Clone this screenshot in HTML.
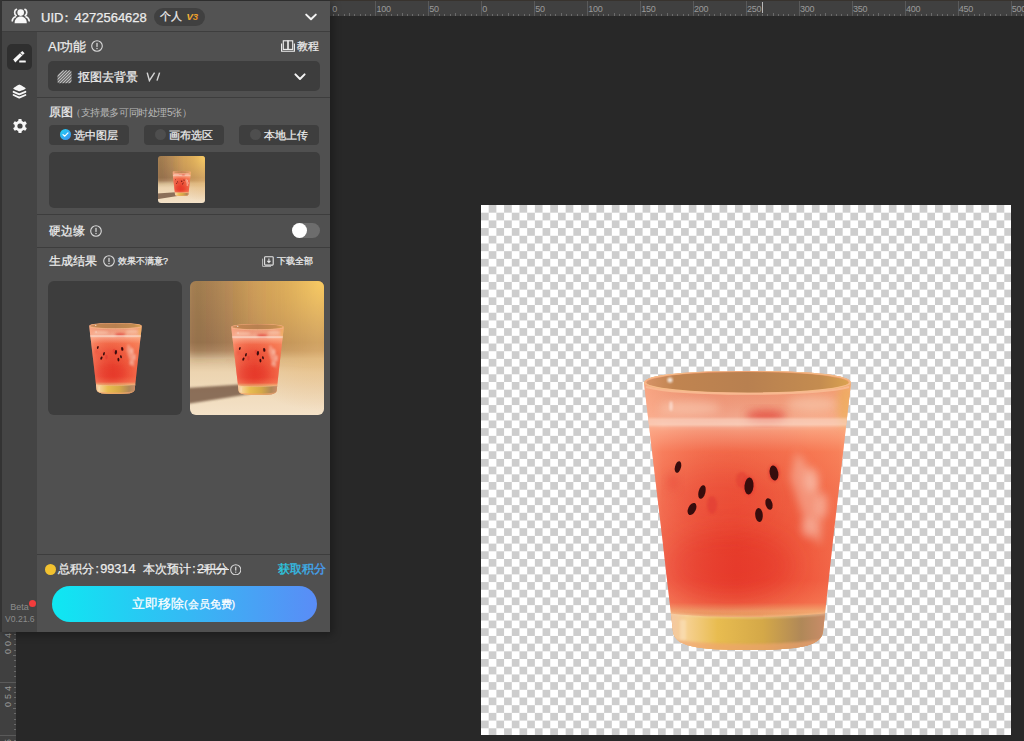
<!DOCTYPE html>
<html><head><meta charset="utf-8">
<style>
*{box-sizing:border-box;margin:0;padding:0}
html,body{width:1024px;height:741px;overflow:hidden;background:#282828;font-family:"Liberation Sans",sans-serif;color:#ececec}
.a{position:absolute}
.t{position:absolute;white-space:nowrap;line-height:1}
.m{-webkit-text-stroke:.25px currentColor}
#rtop{left:330px;top:0;width:694px;height:16px;background:#404040;border-top:1px solid #38332e;overflow:hidden}
#rleft{left:0;top:600px;width:16px;height:141px;background:#404040;overflow:hidden}
.rl{position:absolute;font-size:9px;letter-spacing:-.25px;line-height:1;color:#9a9a9a;white-space:nowrap}
.rv{transform:rotate(-90deg);transform-origin:50% 50%;width:8px;text-align:center}
#canvas{left:481px;top:205px;width:530px;height:530px;
 background:conic-gradient(#cdcdcd 0 25%,#fff 0 50%,#cdcdcd 0 75%,#fff 0);background-size:15.4px 15.4px}
#panel{left:0;top:0;width:330px;height:632px;background:#505050;box-shadow:3px 3px 8px rgba(0,0,0,.3);overflow:hidden}
.div{position:absolute;left:37px;width:293px;height:1px;background:#3d3d3d}
.btn{position:absolute;top:125px;width:80px;height:20px;background:#3e3e3e;border-radius:4px}
.rad{position:absolute;top:129px;width:11px;height:11px;border-radius:50%;background:#4e4e4e}
.info{position:absolute;width:12px;height:12px}
</style></head><body>
<svg width="0" height="0" style="position:absolute">
<defs>
 <clipPath id="gbody"><path d="M644,383 C644,374 690,371 747.5,371 C805,371 851,374 851,383 L833,540 L823,632 C821,646 800,650 748,650 C696,650 675,646 673,632 L662.5,540 Z"/></clipPath>
 <linearGradient id="gv" x1="0" y1="371" x2="0" y2="650" gradientUnits="userSpaceOnUse">
  <stop offset="0" stop-color="#e8a070"/>
  <stop offset=".08" stop-color="#eea07e"/>
  <stop offset=".11" stop-color="#f0a686"/>
  <stop offset=".17" stop-color="#f4b498"/>
  <stop offset=".19" stop-color="#f8c6ae"/>
  <stop offset=".215" stop-color="#f8a282"/>
  <stop offset=".29" stop-color="#f4704e"/>
  <stop offset=".43" stop-color="#ee5c40"/>
  <stop offset=".6" stop-color="#ec5038"/>
  <stop offset=".75" stop-color="#ec4c36"/>
  <stop offset=".83" stop-color="#f06446"/>
  <stop offset=".86" stop-color="#eea870"/>
  <stop offset=".93" stop-color="#e0b050"/>
  <stop offset="1" stop-color="#eea070"/>
 </linearGradient>
 <linearGradient id="gh" x1="644" y1="0" x2="851" y2="0" gradientUnits="userSpaceOnUse">
  <stop offset="0" stop-color="#ffaa88" stop-opacity=".7"/>
  <stop offset=".09" stop-color="#ffa080" stop-opacity=".3"/>
  <stop offset=".45" stop-color="#e03020" stop-opacity=".1"/>
  <stop offset=".8" stop-color="#ff9060" stop-opacity=".22"/>
  <stop offset=".94" stop-color="#ffa070" stop-opacity=".35"/>
  <stop offset="1" stop-color="#ffb080" stop-opacity=".7"/>
 </linearGradient>
 <linearGradient id="gbase" x1="672" y1="0" x2="824" y2="0" gradientUnits="userSpaceOnUse">
  <stop offset="0" stop-color="#f4c8a0"/>
  <stop offset=".1" stop-color="#f6d090"/>
  <stop offset=".3" stop-color="#e8bc50"/>
  <stop offset=".6" stop-color="#d4a848"/>
  <stop offset=".85" stop-color="#b08858"/>
  <stop offset="1" stop-color="#c88c68"/>
 </linearGradient>
 <linearGradient id="grim" x1="644" y1="0" x2="851" y2="0" gradientUnits="userSpaceOnUse">
  <stop offset="0" stop-color="#d89468"/>
  <stop offset=".15" stop-color="#c08450"/>
  <stop offset=".5" stop-color="#b88050"/>
  <stop offset=".85" stop-color="#c48c50"/>
  <stop offset="1" stop-color="#dca450"/>
 </linearGradient>
 <filter id="bl05" x="-50%" y="-50%" width="200%" height="200%"><feGaussianBlur stdDeviation=".6"/></filter>
 <filter id="bl1" x="-20%" y="-50%" width="140%" height="200%"><feGaussianBlur stdDeviation="1.2"/></filter>
 <filter id="bl3" x="-50%" y="-50%" width="200%" height="200%"><feGaussianBlur stdDeviation="4"/></filter>
 <filter id="bl8" x="-50%" y="-50%" width="200%" height="200%"><feGaussianBlur stdDeviation="12"/></filter>
 <symbol id="glass" viewBox="644 371 207 279">
  <g clip-path="url(#gbody)">
   <rect x="640" y="365" width="215" height="290" fill="url(#gv)"/>
   <!-- red center glow -->
   <ellipse cx="730" cy="565" rx="65" ry="35" fill="#e22a22" opacity=".5" filter="url(#bl8)"/>
   <ellipse cx="720" cy="500" rx="55" ry="30" fill="#ea4030" opacity=".3" filter="url(#bl8)"/>
   <rect x="640" y="365" width="215" height="290" fill="url(#gh)"/>
   <!-- pink blotches near seeds -->
   <ellipse cx="712" cy="505" rx="5" ry="9" fill="#e03a34" opacity=".6" filter="url(#bl1)"/>
   <ellipse cx="742" cy="480" rx="6" ry="8" fill="#e03a30" opacity=".5" filter="url(#bl1)"/>
   <ellipse cx="673" cy="482" rx="6" ry="9" fill="#e84a3a" opacity=".5" filter="url(#bl3)"/>
   <!-- foam streak right -->
   <path d="M796,452 C812,466 828,498 820,545 C806,534 800,505 790,478 Z" fill="#f8c4b0" opacity=".5" filter="url(#bl3)"/>
   <ellipse cx="812" cy="480" rx="7" ry="12" fill="#fcd8c8" opacity=".45" filter="url(#bl3)"/>
   <ellipse cx="822" cy="505" rx="6" ry="13" fill="#fcd8c8" opacity=".45" filter="url(#bl3)"/>
   <ellipse cx="808" cy="528" rx="7" ry="10" fill="#fad0c0" opacity=".45" filter="url(#bl3)"/>
   
   <!-- ice/foam band -->
   <ellipse cx="690" cy="408" rx="30" ry="7" fill="#fad0b8" opacity=".5" filter="url(#bl3)"/><ellipse cx="671" cy="406" rx="1.6" ry="5" fill="#fff" opacity=".5" filter="url(#bl1)"/>
   <ellipse cx="766" cy="416" rx="20" ry="6" fill="#e03a30" opacity=".7" filter="url(#bl3)"/><ellipse cx="846" cy="405" rx="9" ry="22" fill="#e8b050" opacity=".55" filter="url(#bl3)"/>
   <ellipse cx="812" cy="404" rx="25" ry="7" fill="#f8d0b8" opacity=".5" filter="url(#bl3)"/>
   <rect x="644" y="418" width="207" height="8" fill="#fad8c6" opacity=".55" filter="url(#bl1)"/>
   <!-- base -->
   <path d="M660,612 C700,619 800,619 840,611 L840,655 L655,655 Z" fill="url(#gbase)"/>
   <path d="M660,612 C700,619 800,619 840,611" fill="none" stroke="#f8d0a8" stroke-width="2" opacity=".6" filter="url(#bl1)"/>
   <path d="M666,638 C700,646 800,646 832,637 L832,655 L662,655 Z" fill="#f0a470" opacity=".65" filter="url(#bl1)"/>
   <rect x="680" y="620" width="6" height="20" fill="#fff0d8" opacity=".35" filter="url(#bl1)"/>
   <!-- inner back wall -->
   <ellipse cx="747.5" cy="382.5" rx="101" ry="10.5" fill="url(#grim)"/>
   <ellipse cx="747.5" cy="382" rx="103" ry="11.5" fill="none" stroke="#f4bc88" stroke-width="1.6"/>
   <path d="M646,387 C680,396 815,396 849,387" fill="none" stroke="#f8b890" stroke-width="2.2"/>
   <circle cx="670" cy="380" r="2.6" fill="#fff" opacity=".8" filter="url(#bl1)"/>
   
  </g>
  <!-- seeds -->
  <g fill="#e03830" opacity=".55" filter="url(#bl1)">
   <ellipse cx="774" cy="473" rx="6" ry="9"/><ellipse cx="749" cy="486" rx="6" ry="10"/>
  </g>
  <g fill="#380c0c" filter="url(#bl05)">
   <ellipse cx="678" cy="467" rx="3" ry="6" transform="rotate(15 678 467)"/>
   <ellipse cx="774" cy="473" rx="4.3" ry="7.5" transform="rotate(-10 774 473)"/>
   <ellipse cx="749" cy="486" rx="4.5" ry="8.5" transform="rotate(5 749 486)"/>
   <ellipse cx="702" cy="492" rx="3.4" ry="7" transform="rotate(15 702 492)"/>
   <ellipse cx="692" cy="509" rx="3.8" ry="6.5" transform="rotate(25 692 509)"/>
   <ellipse cx="769" cy="504" rx="3.4" ry="6" transform="rotate(-15 769 504)"/>
   <ellipse cx="759" cy="515" rx="3.8" ry="7" transform="rotate(-5 759 515)"/>
  </g>
 </symbol>
</defs>
</svg>

<svg width="0" height="0" style="position:absolute">
<defs>
 <linearGradient id="scv" x1="0" y1="0" x2="0" y2="1">
  <stop offset="0" stop-color="#b48c5a"/>
  <stop offset=".46" stop-color="#a67e56"/>
  <stop offset=".52" stop-color="#b89068"/>
  <stop offset=".58" stop-color="#dcc098"/>
  <stop offset=".68" stop-color="#ecd4b0"/>
  <stop offset="1" stop-color="#f4e2c8"/>
 </linearGradient>
 <radialGradient id="scr" cx="134" cy="0" r="130" gradientUnits="userSpaceOnUse">
  <stop offset="0" stop-color="#f8c858" stop-opacity="1"/>
  <stop offset=".55" stop-color="#e8b05a" stop-opacity=".5"/>
  <stop offset="1" stop-color="#d8a060" stop-opacity="0"/>
 </radialGradient>
 <linearGradient id="sch" x1="0" y1="0" x2="1" y2="0">
  <stop offset="0" stop-color="#5a4028" stop-opacity=".25"/>
  <stop offset=".5" stop-color="#5a4028" stop-opacity="0"/>
  <stop offset="1" stop-color="#fff0d0" stop-opacity=".12"/>
 </linearGradient>
 <filter id="sb1" x="-20%" y="-50%" width="140%" height="200%"><feGaussianBlur stdDeviation="1.2"/></filter>
 <filter id="sb4" x="-30%" y="-30%" width="160%" height="160%"><feGaussianBlur stdDeviation="5"/></filter>
 <filter id="sb2" x="-20%" y="-50%" width="140%" height="200%"><feGaussianBlur stdDeviation="2"/></filter>
 <symbol id="scene" viewBox="0 0 134 134">
  <rect width="134" height="134" fill="url(#scv)"/>
  <rect width="134" height="134" fill="url(#scr)"/>
  <rect x="0" y="-10" width="134" height="88" fill="url(#sch)" filter="url(#sb4)"/>
  <path d="M-3,107 L50,103.5 L60,113 L-3,123 Z" fill="#6a4c38" opacity=".75" filter="url(#sb1)"/>
  <svg x="41" y="43" width="53" height="71"><use href="#glass"/></svg>
 </symbol>
</defs>
</svg>

<div id="rtop" class="a"><div class="a" style="left:-7.55px;top:0;width:1px;height:16px;background:#5a5a5a"></div>
<div class="rl" style="left:2.20px;top:4px">0</div>
<div class="a" style="left:3.04px;top:13px;width:1px;height:3px;background:#6a6a6a"></div>
<div class="a" style="left:8.33px;top:13px;width:1px;height:3px;background:#6a6a6a"></div>
<div class="a" style="left:13.63px;top:13px;width:1px;height:3px;background:#6a6a6a"></div>
<div class="a" style="left:18.93px;top:12px;width:1px;height:4px;background:#6a6a6a"></div>
<div class="a" style="left:24.22px;top:13px;width:1px;height:3px;background:#6a6a6a"></div>
<div class="a" style="left:29.51px;top:13px;width:1px;height:3px;background:#6a6a6a"></div>
<div class="a" style="left:34.81px;top:13px;width:1px;height:3px;background:#6a6a6a"></div>
<div class="a" style="left:40.11px;top:13px;width:1px;height:3px;background:#6a6a6a"></div>
<div class="a" style="left:45.40px;top:0;width:1px;height:16px;background:#5a5a5a"></div>
<div class="rl" style="left:46.40px;top:4px">100</div>
<div class="a" style="left:50.69px;top:13px;width:1px;height:3px;background:#6a6a6a"></div>
<div class="a" style="left:55.99px;top:13px;width:1px;height:3px;background:#6a6a6a"></div>
<div class="a" style="left:61.28px;top:13px;width:1px;height:3px;background:#6a6a6a"></div>
<div class="a" style="left:66.58px;top:13px;width:1px;height:3px;background:#6a6a6a"></div>
<div class="a" style="left:71.88px;top:12px;width:1px;height:4px;background:#6a6a6a"></div>
<div class="a" style="left:77.17px;top:13px;width:1px;height:3px;background:#6a6a6a"></div>
<div class="a" style="left:82.46px;top:13px;width:1px;height:3px;background:#6a6a6a"></div>
<div class="a" style="left:87.76px;top:13px;width:1px;height:3px;background:#6a6a6a"></div>
<div class="a" style="left:93.05px;top:13px;width:1px;height:3px;background:#6a6a6a"></div>
<div class="a" style="left:98.35px;top:0;width:1px;height:16px;background:#5a5a5a"></div>
<div class="rl" style="left:99.35px;top:4px">50</div>
<div class="a" style="left:103.65px;top:13px;width:1px;height:3px;background:#6a6a6a"></div>
<div class="a" style="left:108.94px;top:13px;width:1px;height:3px;background:#6a6a6a"></div>
<div class="a" style="left:114.24px;top:13px;width:1px;height:3px;background:#6a6a6a"></div>
<div class="a" style="left:119.53px;top:13px;width:1px;height:3px;background:#6a6a6a"></div>
<div class="a" style="left:124.83px;top:12px;width:1px;height:4px;background:#6a6a6a"></div>
<div class="a" style="left:130.12px;top:13px;width:1px;height:3px;background:#6a6a6a"></div>
<div class="a" style="left:135.42px;top:13px;width:1px;height:3px;background:#6a6a6a"></div>
<div class="a" style="left:140.71px;top:13px;width:1px;height:3px;background:#6a6a6a"></div>
<div class="a" style="left:146.00px;top:13px;width:1px;height:3px;background:#6a6a6a"></div>
<div class="a" style="left:151.30px;top:0;width:1px;height:16px;background:#5a5a5a"></div>
<div class="rl" style="left:152.30px;top:4px">0</div>
<div class="a" style="left:156.60px;top:13px;width:1px;height:3px;background:#6a6a6a"></div>
<div class="a" style="left:161.89px;top:13px;width:1px;height:3px;background:#6a6a6a"></div>
<div class="a" style="left:167.19px;top:13px;width:1px;height:3px;background:#6a6a6a"></div>
<div class="a" style="left:172.48px;top:13px;width:1px;height:3px;background:#6a6a6a"></div>
<div class="a" style="left:177.78px;top:12px;width:1px;height:4px;background:#6a6a6a"></div>
<div class="a" style="left:183.07px;top:13px;width:1px;height:3px;background:#6a6a6a"></div>
<div class="a" style="left:188.37px;top:13px;width:1px;height:3px;background:#6a6a6a"></div>
<div class="a" style="left:193.66px;top:13px;width:1px;height:3px;background:#6a6a6a"></div>
<div class="a" style="left:198.96px;top:13px;width:1px;height:3px;background:#6a6a6a"></div>
<div class="a" style="left:204.25px;top:0;width:1px;height:16px;background:#5a5a5a"></div>
<div class="rl" style="left:205.25px;top:4px">50</div>
<div class="a" style="left:209.54px;top:13px;width:1px;height:3px;background:#6a6a6a"></div>
<div class="a" style="left:214.84px;top:13px;width:1px;height:3px;background:#6a6a6a"></div>
<div class="a" style="left:220.13px;top:13px;width:1px;height:3px;background:#6a6a6a"></div>
<div class="a" style="left:225.43px;top:13px;width:1px;height:3px;background:#6a6a6a"></div>
<div class="a" style="left:230.73px;top:12px;width:1px;height:4px;background:#6a6a6a"></div>
<div class="a" style="left:236.02px;top:13px;width:1px;height:3px;background:#6a6a6a"></div>
<div class="a" style="left:241.32px;top:13px;width:1px;height:3px;background:#6a6a6a"></div>
<div class="a" style="left:246.61px;top:13px;width:1px;height:3px;background:#6a6a6a"></div>
<div class="a" style="left:251.90px;top:13px;width:1px;height:3px;background:#6a6a6a"></div>
<div class="a" style="left:257.20px;top:0;width:1px;height:16px;background:#5a5a5a"></div>
<div class="rl" style="left:258.20px;top:4px">100</div>
<div class="a" style="left:262.50px;top:13px;width:1px;height:3px;background:#6a6a6a"></div>
<div class="a" style="left:267.79px;top:13px;width:1px;height:3px;background:#6a6a6a"></div>
<div class="a" style="left:273.09px;top:13px;width:1px;height:3px;background:#6a6a6a"></div>
<div class="a" style="left:278.38px;top:13px;width:1px;height:3px;background:#6a6a6a"></div>
<div class="a" style="left:283.68px;top:12px;width:1px;height:4px;background:#6a6a6a"></div>
<div class="a" style="left:288.97px;top:13px;width:1px;height:3px;background:#6a6a6a"></div>
<div class="a" style="left:294.27px;top:13px;width:1px;height:3px;background:#6a6a6a"></div>
<div class="a" style="left:299.56px;top:13px;width:1px;height:3px;background:#6a6a6a"></div>
<div class="a" style="left:304.86px;top:13px;width:1px;height:3px;background:#6a6a6a"></div>
<div class="a" style="left:310.15px;top:0;width:1px;height:16px;background:#5a5a5a"></div>
<div class="rl" style="left:311.15px;top:4px">150</div>
<div class="a" style="left:315.45px;top:13px;width:1px;height:3px;background:#6a6a6a"></div>
<div class="a" style="left:320.74px;top:13px;width:1px;height:3px;background:#6a6a6a"></div>
<div class="a" style="left:326.04px;top:13px;width:1px;height:3px;background:#6a6a6a"></div>
<div class="a" style="left:331.33px;top:13px;width:1px;height:3px;background:#6a6a6a"></div>
<div class="a" style="left:336.63px;top:12px;width:1px;height:4px;background:#6a6a6a"></div>
<div class="a" style="left:341.92px;top:13px;width:1px;height:3px;background:#6a6a6a"></div>
<div class="a" style="left:347.22px;top:13px;width:1px;height:3px;background:#6a6a6a"></div>
<div class="a" style="left:352.51px;top:13px;width:1px;height:3px;background:#6a6a6a"></div>
<div class="a" style="left:357.81px;top:13px;width:1px;height:3px;background:#6a6a6a"></div>
<div class="a" style="left:363.10px;top:0;width:1px;height:16px;background:#5a5a5a"></div>
<div class="rl" style="left:364.10px;top:4px">200</div>
<div class="a" style="left:368.39px;top:13px;width:1px;height:3px;background:#6a6a6a"></div>
<div class="a" style="left:373.69px;top:13px;width:1px;height:3px;background:#6a6a6a"></div>
<div class="a" style="left:378.99px;top:13px;width:1px;height:3px;background:#6a6a6a"></div>
<div class="a" style="left:384.28px;top:13px;width:1px;height:3px;background:#6a6a6a"></div>
<div class="a" style="left:389.58px;top:12px;width:1px;height:4px;background:#6a6a6a"></div>
<div class="a" style="left:394.87px;top:13px;width:1px;height:3px;background:#6a6a6a"></div>
<div class="a" style="left:400.17px;top:13px;width:1px;height:3px;background:#6a6a6a"></div>
<div class="a" style="left:405.46px;top:13px;width:1px;height:3px;background:#6a6a6a"></div>
<div class="a" style="left:410.75px;top:13px;width:1px;height:3px;background:#6a6a6a"></div>
<div class="a" style="left:416.05px;top:0;width:1px;height:16px;background:#5a5a5a"></div>
<div class="rl" style="left:417.05px;top:4px">250</div>
<div class="a" style="left:421.34px;top:13px;width:1px;height:3px;background:#6a6a6a"></div>
<div class="a" style="left:426.64px;top:13px;width:1px;height:3px;background:#6a6a6a"></div>
<div class="a" style="left:431.93px;top:13px;width:1px;height:3px;background:#6a6a6a"></div>
<div class="a" style="left:437.23px;top:13px;width:1px;height:3px;background:#6a6a6a"></div>
<div class="a" style="left:442.52px;top:12px;width:1px;height:4px;background:#6a6a6a"></div>
<div class="a" style="left:447.82px;top:13px;width:1px;height:3px;background:#6a6a6a"></div>
<div class="a" style="left:453.12px;top:13px;width:1px;height:3px;background:#6a6a6a"></div>
<div class="a" style="left:458.41px;top:13px;width:1px;height:3px;background:#6a6a6a"></div>
<div class="a" style="left:463.70px;top:13px;width:1px;height:3px;background:#6a6a6a"></div>
<div class="a" style="left:469.00px;top:0;width:1px;height:16px;background:#5a5a5a"></div>
<div class="rl" style="left:470.00px;top:4px">300</div>
<div class="a" style="left:474.29px;top:13px;width:1px;height:3px;background:#6a6a6a"></div>
<div class="a" style="left:479.59px;top:13px;width:1px;height:3px;background:#6a6a6a"></div>
<div class="a" style="left:484.88px;top:13px;width:1px;height:3px;background:#6a6a6a"></div>
<div class="a" style="left:490.18px;top:13px;width:1px;height:3px;background:#6a6a6a"></div>
<div class="a" style="left:495.48px;top:12px;width:1px;height:4px;background:#6a6a6a"></div>
<div class="a" style="left:500.77px;top:13px;width:1px;height:3px;background:#6a6a6a"></div>
<div class="a" style="left:506.07px;top:13px;width:1px;height:3px;background:#6a6a6a"></div>
<div class="a" style="left:511.36px;top:13px;width:1px;height:3px;background:#6a6a6a"></div>
<div class="a" style="left:516.65px;top:13px;width:1px;height:3px;background:#6a6a6a"></div>
<div class="a" style="left:521.95px;top:0;width:1px;height:16px;background:#5a5a5a"></div>
<div class="rl" style="left:522.95px;top:4px">350</div>
<div class="a" style="left:527.25px;top:13px;width:1px;height:3px;background:#6a6a6a"></div>
<div class="a" style="left:532.54px;top:13px;width:1px;height:3px;background:#6a6a6a"></div>
<div class="a" style="left:537.84px;top:13px;width:1px;height:3px;background:#6a6a6a"></div>
<div class="a" style="left:543.13px;top:13px;width:1px;height:3px;background:#6a6a6a"></div>
<div class="a" style="left:548.43px;top:12px;width:1px;height:4px;background:#6a6a6a"></div>
<div class="a" style="left:553.72px;top:13px;width:1px;height:3px;background:#6a6a6a"></div>
<div class="a" style="left:559.02px;top:13px;width:1px;height:3px;background:#6a6a6a"></div>
<div class="a" style="left:564.31px;top:13px;width:1px;height:3px;background:#6a6a6a"></div>
<div class="a" style="left:569.61px;top:13px;width:1px;height:3px;background:#6a6a6a"></div>
<div class="a" style="left:574.90px;top:0;width:1px;height:16px;background:#5a5a5a"></div>
<div class="rl" style="left:575.90px;top:4px">400</div>
<div class="a" style="left:580.20px;top:13px;width:1px;height:3px;background:#6a6a6a"></div>
<div class="a" style="left:585.49px;top:13px;width:1px;height:3px;background:#6a6a6a"></div>
<div class="a" style="left:590.79px;top:13px;width:1px;height:3px;background:#6a6a6a"></div>
<div class="a" style="left:596.08px;top:13px;width:1px;height:3px;background:#6a6a6a"></div>
<div class="a" style="left:601.38px;top:12px;width:1px;height:4px;background:#6a6a6a"></div>
<div class="a" style="left:606.67px;top:13px;width:1px;height:3px;background:#6a6a6a"></div>
<div class="a" style="left:611.97px;top:13px;width:1px;height:3px;background:#6a6a6a"></div>
<div class="a" style="left:617.26px;top:13px;width:1px;height:3px;background:#6a6a6a"></div>
<div class="a" style="left:622.56px;top:13px;width:1px;height:3px;background:#6a6a6a"></div>
<div class="a" style="left:627.85px;top:0;width:1px;height:16px;background:#5a5a5a"></div>
<div class="rl" style="left:628.85px;top:4px">450</div>
<div class="a" style="left:633.14px;top:13px;width:1px;height:3px;background:#6a6a6a"></div>
<div class="a" style="left:638.44px;top:13px;width:1px;height:3px;background:#6a6a6a"></div>
<div class="a" style="left:643.74px;top:13px;width:1px;height:3px;background:#6a6a6a"></div>
<div class="a" style="left:649.03px;top:13px;width:1px;height:3px;background:#6a6a6a"></div>
<div class="a" style="left:654.33px;top:12px;width:1px;height:4px;background:#6a6a6a"></div>
<div class="a" style="left:659.62px;top:13px;width:1px;height:3px;background:#6a6a6a"></div>
<div class="a" style="left:664.92px;top:13px;width:1px;height:3px;background:#6a6a6a"></div>
<div class="a" style="left:670.21px;top:13px;width:1px;height:3px;background:#6a6a6a"></div>
<div class="a" style="left:675.50px;top:13px;width:1px;height:3px;background:#6a6a6a"></div>
<div class="a" style="left:680.80px;top:0;width:1px;height:16px;background:#5a5a5a"></div>
<div class="rl" style="left:681.80px;top:4px">500</div>
<div class="a" style="left:686.09px;top:13px;width:1px;height:3px;background:#6a6a6a"></div>
<div class="a" style="left:691.39px;top:13px;width:1px;height:3px;background:#6a6a6a"></div><div class="a" style="left:431.5px;top:1px;width:1px;height:11px;background:#b8b8b8"></div></div>
<div id="rleft" class="a" style="top:0;height:741px"><div class="a" style="left:0;top:0;width:16px;height:741px"><div class="a" style="left:0;top:628.60px;width:16px;height:1px;background:#5a5a5a"></div>
<div class="rl rv" style="left:4.3px;top:630.60px">4</div>
<div class="rl rv" style="left:4.3px;top:639.00px">0</div>
<div class="rl rv" style="left:4.3px;top:647.40px">0</div>
<div class="a" style="left:14px;top:633.89px;width:2px;height:1px;background:#6a6a6a"></div>
<div class="a" style="left:14px;top:639.19px;width:2px;height:1px;background:#6a6a6a"></div>
<div class="a" style="left:14px;top:644.49px;width:2px;height:1px;background:#6a6a6a"></div>
<div class="a" style="left:14px;top:649.78px;width:2px;height:1px;background:#6a6a6a"></div>
<div class="a" style="left:13px;top:655.08px;width:3px;height:1px;background:#6a6a6a"></div>
<div class="a" style="left:14px;top:660.37px;width:2px;height:1px;background:#6a6a6a"></div>
<div class="a" style="left:14px;top:665.67px;width:2px;height:1px;background:#6a6a6a"></div>
<div class="a" style="left:14px;top:670.96px;width:2px;height:1px;background:#6a6a6a"></div>
<div class="a" style="left:14px;top:676.25px;width:2px;height:1px;background:#6a6a6a"></div>
<div class="a" style="left:0;top:681.55px;width:16px;height:1px;background:#5a5a5a"></div>
<div class="rl rv" style="left:4.3px;top:683.55px">4</div>
<div class="rl rv" style="left:4.3px;top:691.95px">5</div>
<div class="rl rv" style="left:4.3px;top:700.35px">0</div>
<div class="a" style="left:14px;top:686.84px;width:2px;height:1px;background:#6a6a6a"></div>
<div class="a" style="left:14px;top:692.14px;width:2px;height:1px;background:#6a6a6a"></div>
<div class="a" style="left:14px;top:697.43px;width:2px;height:1px;background:#6a6a6a"></div>
<div class="a" style="left:14px;top:702.73px;width:2px;height:1px;background:#6a6a6a"></div>
<div class="a" style="left:13px;top:708.02px;width:3px;height:1px;background:#6a6a6a"></div>
<div class="a" style="left:14px;top:713.32px;width:2px;height:1px;background:#6a6a6a"></div>
<div class="a" style="left:14px;top:718.62px;width:2px;height:1px;background:#6a6a6a"></div>
<div class="a" style="left:14px;top:723.91px;width:2px;height:1px;background:#6a6a6a"></div>
<div class="a" style="left:14px;top:729.20px;width:2px;height:1px;background:#6a6a6a"></div>
<div class="a" style="left:0;top:734.50px;width:16px;height:1px;background:#5a5a5a"></div>
<div class="rl rv" style="left:4.3px;top:736.50px">5</div>
<div class="rl rv" style="left:4.3px;top:744.90px">0</div>
<div class="rl rv" style="left:4.3px;top:753.30px">0</div>
<div class="a" style="left:14px;top:739.79px;width:2px;height:1px;background:#6a6a6a"></div>
<div class="a" style="left:14px;top:745.09px;width:2px;height:1px;background:#6a6a6a"></div>
<div class="a" style="left:14px;top:750.38px;width:2px;height:1px;background:#6a6a6a"></div>
<div class="a" style="left:14px;top:755.68px;width:2px;height:1px;background:#6a6a6a"></div>
<div class="a" style="left:13px;top:760.98px;width:3px;height:1px;background:#6a6a6a"></div>
<div class="a" style="left:14px;top:766.27px;width:2px;height:1px;background:#6a6a6a"></div>
<div class="a" style="left:14px;top:771.57px;width:2px;height:1px;background:#6a6a6a"></div>
<div class="a" style="left:14px;top:776.86px;width:2px;height:1px;background:#6a6a6a"></div>
<div class="a" style="left:14px;top:782.15px;width:2px;height:1px;background:#6a6a6a"></div></div></div>
<div id="canvas" class="a"></div>
<svg class="a" style="left:644px;top:371px" width="207" height="279"><use href="#glass"/></svg>

<div id="panel" class="a">
 <div class="a" style="left:0;top:0;width:330px;height:32px;background:#535353"></div>
 <div class="a" style="left:0;top:0;width:330px;height:1px;background:#2e2e2e"></div>
 <div class="a" style="left:0;top:31px;width:330px;height:1px;background:#3e3e3e"></div>
 <div class="a" style="left:0;top:32px;width:37px;height:600px;background:#444"></div>
 <div class="a" style="left:0;top:0;width:2px;height:632px;background:#333"></div>

 <!-- header -->
 <svg class="a" style="left:8px;top:6px" width="28" height="21" viewBox="0 0 28 21">
  <g fill="none" stroke="#f4f4f4" stroke-width="1.7" stroke-linecap="round">
   <path d="M8.4,3.4 C6.2,4 6,8.4 8.2,9.4"/><path d="M7.4,10.8 C5.4,11.6 4.4,13 4.3,14.8"/>
   <path d="M17,3.4 C19.2,4 19.4,8.4 17.2,9.4"/><path d="M18,10.8 C20,11.6 21,13 21.1,14.8"/>
  </g>
  <g fill="#f8f8f8">
   <circle cx="12.7" cy="6.6" r="3.3"/>
   <path d="M6.6,17.2 C6.6,12.6 9.4,10.4 12.7,10.4 C16,10.4 18.8,12.6 18.8,17.2 Z"/>
  </g>
 </svg>
 <div class="t m" style="left:41px;top:10.5px;font-size:13px">UID</div>
 <div class="t m" style="left:60px;top:10.5px;font-size:13px">：</div>
 <div class="t m" style="left:74.5px;top:10.5px;font-size:13px">4272564628</div>
 <div class="a" style="left:154px;top:7.5px;width:51px;height:18px;border-radius:9px;background:#404040"></div>
 <div class="t m" style="left:159.8px;top:10.8px;font-size:10.6px">个人</div>
 <svg class="a" style="left:186px;top:12px" width="14" height="9" viewBox="0 0 14 9">
  <defs><linearGradient id="v3g" x1="0" y1="0" x2="1" y2="1"><stop offset="0" stop-color="#ffd24a"/><stop offset="1" stop-color="#e07a10"/></linearGradient></defs>
  <text x="0.5" y="8" font-family="Liberation Sans" font-size="9.5" font-style="italic" font-weight="bold" fill="url(#v3g)">V3</text>
 </svg>
 <svg class="a" style="left:304px;top:12px" width="14" height="10" viewBox="0 0 14 10"><path d="M2.2,2.6 L7,7.2 L11.8,2.6" fill="none" stroke="#f4f4f4" stroke-width="2" stroke-linecap="round" stroke-linejoin="round"/></svg>

 <!-- sidebar -->
 <div class="a" style="left:7px;top:44px;width:25px;height:26px;border-radius:5px;background:#2f2f2f"></div>
 <svg class="a" style="left:12px;top:50px" width="16" height="14" viewBox="0 0 16 14">
  <path d="M1.2,9.6 L10.3,0.9 L12.6,3.3 L3.3,12.6 Z" fill="#f6f6f6"/>
  <path d="M8.3,3 L10.6,5.3" stroke="#2f2f2f" stroke-width=".9"/>
  <rect x="7.2" y="10.4" width="6.6" height="2.2" rx=".5" fill="#f6f6f6"/>
 </svg>
 <svg class="a" style="left:12px;top:81px" width="15" height="18" viewBox="0 0 15 18">
  <path d="M7.3,3.4 C7.6,3.4 13.8,6.8 13.8,7.4 C13.8,8 7.6,10.2 7.3,10.2 C7,10.2 1.2,8 1.2,7.4 C1.2,6.8 7,3.4 7.3,3.4 Z" fill="#f6f6f6"/>
  <path d="M1.6,10.8 L7.3,13.4 L13.4,10.8" fill="none" stroke="#f6f6f6" stroke-width="1.9" stroke-linecap="round" stroke-linejoin="round"/>
  <path d="M1.6,14 L7.3,16.6 L13.4,14" fill="none" stroke="#f6f6f6" stroke-width="1.9" stroke-linecap="round" stroke-linejoin="round"/>
 </svg>
 <svg class="a" style="left:11.5px;top:118px" width="16" height="16" viewBox="-8 -8 16 16">
  <g fill="#f6f6f6"><rect x="-1.7" y="-7.1" width="3.4" height="4" rx=".8" transform="rotate(0)"/><rect x="-1.7" y="-7.1" width="3.4" height="4" rx=".8" transform="rotate(60)"/><rect x="-1.7" y="-7.1" width="3.4" height="4" rx=".8" transform="rotate(120)"/><rect x="-1.7" y="-7.1" width="3.4" height="4" rx=".8" transform="rotate(180)"/><rect x="-1.7" y="-7.1" width="3.4" height="4" rx=".8" transform="rotate(240)"/><rect x="-1.7" y="-7.1" width="3.4" height="4" rx=".8" transform="rotate(300)"/><circle r="5.4"/></g><circle r="2.6" fill="#444"/>
 </svg>
 <div class="t" style="left:10.3px;top:603px;font-size:9px;color:#8c8c8c">Beta</div>
 <div class="a" style="left:29.2px;top:600.2px;width:7px;height:7px;border-radius:50%;background:#f23c3c"></div>
 <div class="t" style="left:5px;top:614.5px;font-size:8.6px;color:#8c8c8c">V0.21.6</div>

 <!-- AI section -->
 <div class="t m" style="left:48px;top:40px;font-size:13px">AI功能</div>
 <svg class="info" style="left:91px;top:40px" viewBox="0 0 12 12"><circle cx="6" cy="6" r="5.3" fill="none" stroke="#d8d8d8" stroke-width="1.1"/><rect x="5.4" y="2.9" width="1.2" height="4" fill="#e0e0e0"/><rect x="5.4" y="7.9" width="1.2" height="1.2" fill="#e0e0e0"/></svg>
 <svg class="a" style="left:281px;top:40px" width="14" height="12" viewBox="0 0 14 12">
  <g fill="none" stroke="#f0f0f0" stroke-width="1.1">
   <rect x="2.3" y=".8" width="4.7" height="8.6"/><rect x="7" y=".8" width="4.7" height="8.6"/>
   <path d="M.6,3.6 V11.3 H13.4 V3.6"/>
  </g>
 </svg>
 <div class="t m" style="left:297px;top:41px;font-size:11px">教程</div>
 <div class="a" style="left:48px;top:61px;width:272px;height:30px;border-radius:5px;background:#3d3d3d"></div>
 <svg class="a" style="left:57px;top:70px" width="15" height="14" viewBox="0 0 15 14">
  <defs><clipPath id="hc"><rect x=".5" y=".3" width="14" height="13" rx="1.6"/></clipPath></defs>
  <g clip-path="url(#hc)" stroke="#bdbdbd" stroke-width="1.3">
   <path d="M-4,14 L10,0 M-1,14 L13,0 M2,14 L16,0 M5,14 L19,0 M8,14 L22,0 M11,14 L25,0 M-7,14 L7,0"/>
  </g>
 </svg>
 <div class="t m" style="left:78px;top:71px;font-size:12.4px">抠图去背景</div>
 <svg class="a" style="left:145px;top:71px" width="16" height="11" viewBox="0 0 16 11"><path d="M2.2,1.6 L4.4,9.6 L9.6,1.6 M14.6,1.6 L12,9.6" fill="none" stroke="#d4d4d4" stroke-width="1.45"/></svg>
 <svg class="a" style="left:293px;top:71px" width="14" height="12" viewBox="0 0 14 12"><path d="M2.4,3.4 L7,8 L11.6,3.4" fill="none" stroke="#f4f4f4" stroke-width="2" stroke-linecap="round" stroke-linejoin="round"/></svg>
 <div class="div" style="top:97px"></div>

 <!-- 原图 -->
 <div class="t m" style="left:48.5px;top:106px;font-size:12.2px">原图</div>
 <div class="t" style="left:71px;top:107.5px;font-size:10px;letter-spacing:-.4px;color:#b8b8b8">（支持最多可同时处理5张）</div>
 <div class="btn" style="left:49px"></div>
 <div class="btn" style="left:144px"></div>
 <div class="btn" style="left:239px"></div>
 <svg class="a" style="left:59.5px;top:129.4px" width="11" height="11" viewBox="0 0 11 11">
  <defs><linearGradient id="ckg" x1="0" y1="0" x2="1" y2="1"><stop offset="0" stop-color="#22d4f4"/><stop offset="1" stop-color="#3d8cf0"/></linearGradient></defs>
  <circle cx="5.5" cy="5.5" r="5.5" fill="url(#ckg)"/><path d="M3,5.6 L4.8,7.2 L8,3.9" fill="none" stroke="#fff" stroke-width="1.2" stroke-linecap="round" stroke-linejoin="round"/>
 </svg>
 <div class="rad" style="left:155.2px"></div>
 <div class="rad" style="left:250.2px"></div>
 <div class="t m" style="left:74px;top:130px;font-size:11px">选中图层</div>
 <div class="t m" style="left:169px;top:130px;font-size:11px">画布选区</div>
 <div class="t m" style="left:264px;top:130px;font-size:11px">本地上传</div>
 <div class="a" style="left:49px;top:152px;width:271px;height:56px;border-radius:5px;background:#3d3d3d"></div>
 <div id="thumb" class="a" style="left:158px;top:156px;width:47px;height:47px;border-radius:3px;overflow:hidden"><svg width="47" height="47" viewBox="0 0 134 134" preserveAspectRatio="none"><use href="#scene"/></svg></div>
 <div class="div" style="top:214px"></div>

 <div class="t m" style="left:48.5px;top:225px;font-size:12.3px">硬边缘</div>
 <svg class="info" style="left:90.4px;top:225px" viewBox="0 0 12 12"><circle cx="6" cy="6" r="5.3" fill="none" stroke="#d8d8d8" stroke-width="1.1"/><rect x="5.4" y="2.9" width="1.2" height="4" fill="#e0e0e0"/><rect x="5.4" y="7.9" width="1.2" height="1.2" fill="#e0e0e0"/></svg>
 <div class="a" style="left:292px;top:222.5px;width:28px;height:15.5px;border-radius:8px;background:#6d6d6d"></div>
 <div class="a" style="left:292px;top:222.7px;width:15px;height:15px;border-radius:50%;background:#fff"></div>
 <div class="div" style="top:247px"></div>

 <div class="t m" style="left:48.5px;top:255px;font-size:12.1px">生成结果</div>
 <svg class="info" style="left:103.2px;top:255.2px" viewBox="0 0 12 12"><circle cx="6" cy="6" r="5.3" fill="none" stroke="#d8d8d8" stroke-width="1.1"/><rect x="5.4" y="2.9" width="1.2" height="4" fill="#e0e0e0"/><rect x="5.4" y="7.9" width="1.2" height="1.2" fill="#e0e0e0"/></svg>
 <div class="t m" style="left:118px;top:256.8px;font-size:9px">效果不满意?</div>
 <svg class="a" style="left:262px;top:256px" width="12" height="11" viewBox="0 0 12 11">
  <rect x="2.6" y=".7" width="8.6" height="8.4" rx=".8" fill="none" stroke="#e6e6e6" stroke-width="1.1"/>
  <path d="M.6,2.6 V10.4 H9" fill="none" stroke="#bbb" stroke-width="1"/>
  <path d="M6.9,2.6 V6.2 M5.3,4.8 L6.9,6.4 L8.5,4.8" fill="none" stroke="#e6e6e6" stroke-width="1.1"/>
 </svg>
 <div class="t m" style="left:277.3px;top:256.8px;font-size:9.2px">下载全部</div>
 <div class="a" style="left:48px;top:281px;width:134px;height:134px;border-radius:6px;background:#3d3d3d;overflow:hidden">
  <svg class="a" style="left:41px;top:42px" width="53" height="71"><use href="#glass"/></svg>
 </div>
 <div id="card2" class="a" style="left:190px;top:281px;width:134px;height:134px;border-radius:6px;overflow:hidden"><svg width="134" height="134"><use href="#scene"/></svg></div>

 <div class="div" style="top:554px"></div>
 <div class="a" style="left:45px;top:564.2px;width:11px;height:11px;border-radius:50%;background:#f2c230"></div>
 <div class="t m" style="left:58px;top:563.2px;font-size:12.2px">总积分</div>
 <div class="t m" style="left:95.5px;top:563.2px;font-size:12.2px">:</div>
 <div class="t m" style="left:100.2px;top:563.2px;font-size:12.7px">99314</div>
 <div class="t m" style="left:142.8px;top:563.2px;font-size:12.3px">本次预计</div>
 <div class="t m" style="left:192.3px;top:563.2px;font-size:12.2px">:</div>
 <div class="t m" style="left:197.2px;top:563.2px;font-size:12.2px">2积分</div>
 <div class="a" style="left:197px;top:569px;width:31.5px;height:1.2px;background:#e8e8e8"></div>
 <svg class="info" style="left:229.7px;top:563.6px;width:11.5px;height:11.5px" viewBox="0 0 12 12"><circle cx="6" cy="6" r="5.3" fill="none" stroke="#d8d8d8" stroke-width="1.1"/><rect x="5.4" y="2.9" width="1.2" height="4" fill="#e0e0e0"/><rect x="5.4" y="7.9" width="1.2" height="1.2" fill="#e0e0e0"/></svg>
 <svg class="a" style="left:274px;top:558px" width="54" height="22" viewBox="0 0 54 22">
  <defs><linearGradient id="hqg" x1="0" y1="0" x2="1" y2="0"><stop offset="0" stop-color="#26d0dc"/><stop offset="1" stop-color="#4a98f2"/></linearGradient></defs>
  <text x="3.5" y="15.4" font-family="Liberation Sans" font-size="11.5" fill="url(#hqg)" stroke="url(#hqg)" stroke-width=".35">获取积分</text>
 </svg>
 <div class="a" style="left:52px;top:585.5px;width:265px;height:36px;border-radius:18px;background:linear-gradient(90deg,#0ee8f2,#5a8cf6)"></div>
 <div class="t m" style="left:132px;top:597px;font-size:13.2px;color:#fff">立即移除<span style="font-size:10.8px">(会员免费)</span></div>
</div>
</body></html>
